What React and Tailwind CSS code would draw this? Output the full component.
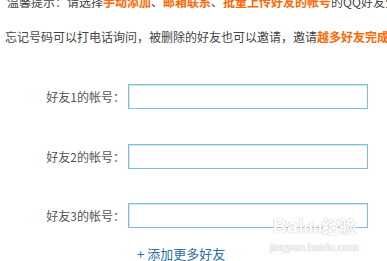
import React from 'react';

const font = { fontFamily: '"Noto Sans CJK SC", "Noto Sans", sans-serif' };

const Row = ({ n }) => (
    <div className="flex items-center">
        <label className="w-[125px] text-right text-[12px] text-[#555] leading-[25px]">好友{n}的帐号：</label>
        <input className="ml-[3px] w-[240px] h-[25px] border border-[#7dbfd7] shadow-[inset_1px_1px_1px_rgba(120,180,205,0.35)] outline-none bg-white" />
    </div>
);

const App = () => {
    return (
        <div className="relative w-[387px] h-[261px] overflow-hidden bg-white" style={font}>
            <div className="mt-[-8px] pl-[7px] text-[12px] leading-[20px] whitespace-nowrap text-[#444]">
                温馨提示：请选择<span className="text-[#ff6600] font-bold">手动添加</span>、<span className="text-[#ff6600] font-bold">邮箱联系</span>、<span className="text-[#ff6600] font-bold">批量上传好友的帐号</span>的QQ好友分享
            </div>
            <div className="mt-[15px] pl-[5px] text-[12px] leading-[20px] whitespace-nowrap text-[#444]">
                忘记号码可以打电话询问，被删除的好友也可以邀请，邀请<span className="text-[#ff6600] font-bold">越多好友完成任务</span>
            </div>

            <div className="mt-[37px] flex flex-col gap-[34.5px]">
                <Row n={1} />
                <Row n={2} />
                <Row n={3} />
            </div>

            <div className="mt-[16px] pl-[137px] text-[13px] leading-[20px] text-[#2f6fa6] whitespace-nowrap">
                + 添加更多好友
            </div>

            {/* watermark */}
            <div className="absolute left-[270px] top-[214px] pointer-events-none select-none text-center" style={{ fontFamily: '"Liberation Sans", Arial, sans-serif' }}>
                <div className="text-[20px] font-bold leading-[24px] text-white [text-shadow:0_0_1px_#bbb,0_0_1px_#bbb]">
                    Bai<span className="text-[15px]">du</span><span className="text-[17px]" style={font}>经验</span>
                </div>
                <div className="text-[11px] leading-[14px] text-white [text-shadow:0_0_1px_#bbb,0_0_1px_#bbb]">jingyan.baidu.com</div>
            </div>
        </div>
    );
};

export default App;
